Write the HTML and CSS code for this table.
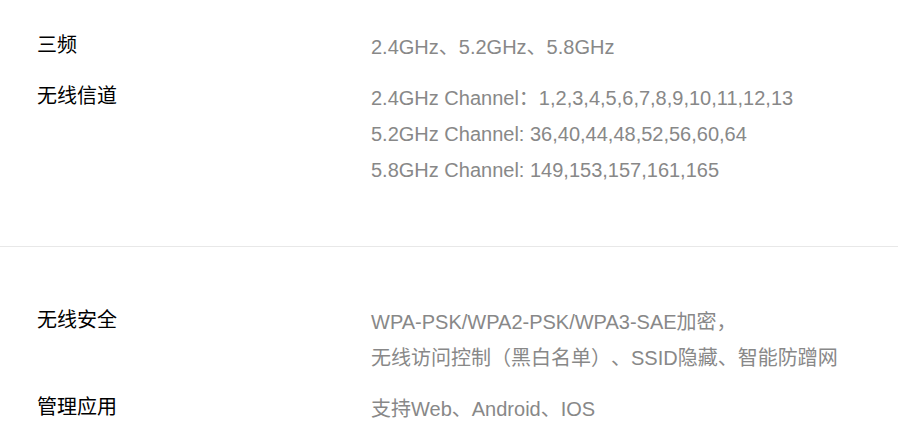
FILE: index.html
```html
<!DOCTYPE html>
<html lang="zh-CN">
<head>
  <meta charset="UTF-8" />
  <meta name="viewport" content="width=device-width, initial-scale=1.0"/>
  <title>产品参数</title>
  <link rel="stylesheet" href="styles.css">
</head>
<body>
  <div class="section first">
    <div class="row">
      <div class="label">三频</div>
      <div class="value">
        <p>2.4GHz、5.2GHz、5.8GHz</p>
      </div>
    </div>
    <div class="row">
      <div class="label">无线信道</div>
      <div class="value">
        <p>2.4GHz Channel：1,2,3,4,5,6,7,8,9,10,11,12,13</p>
        <p>5.2GHz Channel: 36,40,44,48,52,56,60,64</p>
        <p>5.8GHz Channel: 149,153,157,161,165</p>
      </div>
    </div>
  </div>

  <div class="section">
    <div class="row">
      <div class="label">无线安全</div>
      <div class="value">
        <p>WPA-PSK/WPA2-PSK/WPA3-SAE加密，</p>
        <p>无线访问控制（黑白名单）、SSID隐藏、智能防蹭网</p>
      </div>
    </div>
    <div class="row">
      <div class="label">管理应用</div>
      <div class="value">
        <p>支持Web、Android、IOS</p>
      </div>
    </div>
  </div>
</body>
</html>
```

FILE: styles.css
```css
body {
  margin: 0;
  background: #fff;
  font-family: "Liberation Sans", "Noto Sans CJK SC", sans-serif;
  font-size: 20px;
  text-spacing-trim: space-all;
}
.section {
  display: flex;
  flex-direction: column;
  gap: 15px;
  padding: 57px 0 0 37px;
}
.section.first {
  padding-top: 29px;
  padding-bottom: 58px;
  border-bottom: 1px solid #e8e8e8;
}
.row {
  display: flex;
}
.label {
  width: 334px;
  flex-shrink: 0;
  color: #000;
  line-height: 32px;
}
.value {
  color: #888;
}
.value p {
  margin: 0;
  line-height: 36px;
}
```
